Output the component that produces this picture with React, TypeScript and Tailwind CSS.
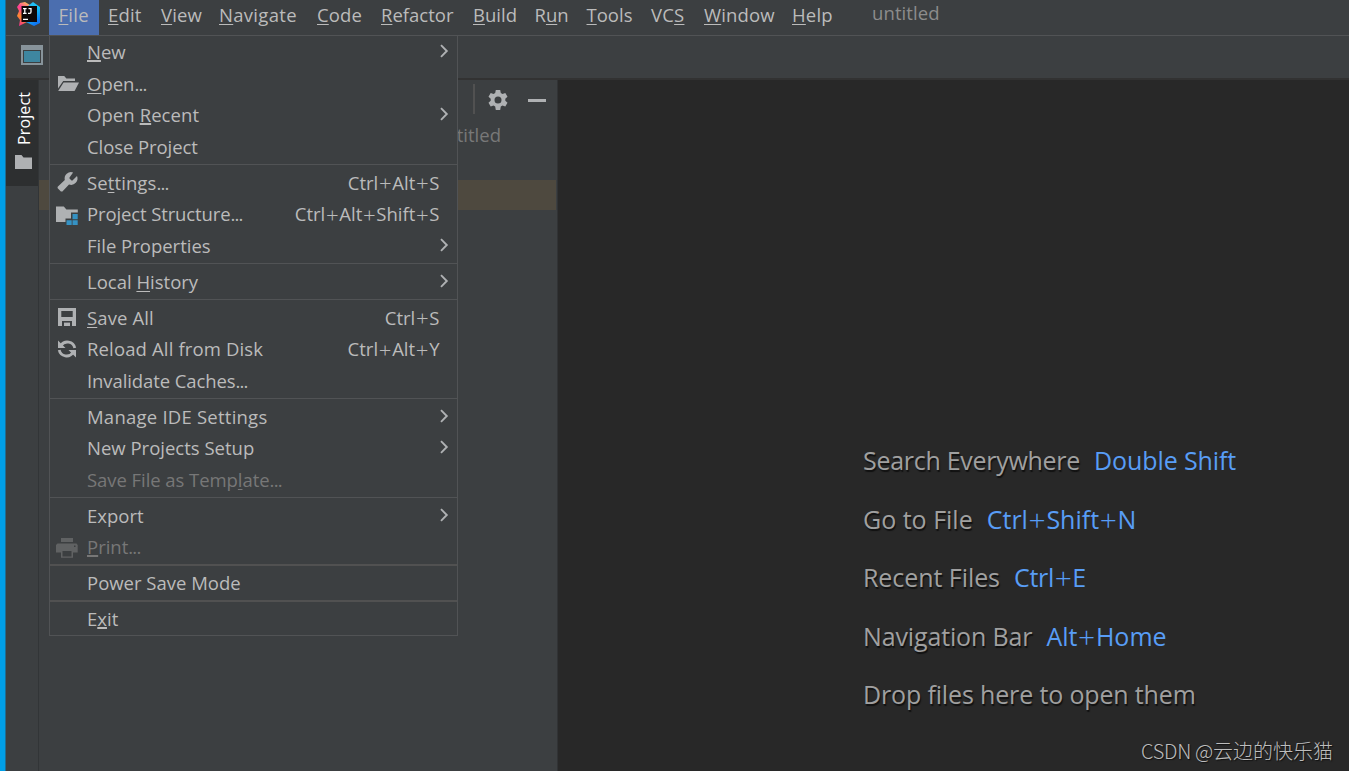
import React from "react";

type IconName = "open" | "wrench" | "structure" | "save" | "reload" | "print";

function Icon({ name }: { name: IconName }) {
  const cls = "h-6 w-6 shrink-0";
  switch (name) {
    case "open":
      return (
        <svg viewBox="0 0 24 24" className={cls} fill="#afb1b3">
          <path d="M3 4h6.2l2.2 2.6H20V9H8.2L3 16.5z" />
          <path d="M8.6 10.4H24L19.6 19H3.2z" />
        </svg>
      );
    case "wrench":
      return (
        <svg viewBox="0 0 24 24" className={cls} fill="#afb1b3">
          <path d="M14.7 6.3a1 1 0 0 0 0 1.4l1.6 1.6a1 1 0 0 0 1.4 0l4.300-4.300a6.400 6.400 0 0 1-8 8.500l-6.600 6.900a2 2 0 0 1-1.500 0l-3.200-3.200a2 2 0 0 1 0-1.500l7.100-6.700a6.400 6.400 0 0 1 8.300-7.500l-3.400 4.800z" />
        </svg>
      );
    case "structure":
      return (
        <svg viewBox="0 0 24 24" className={cls}>
          <path fill="#afb1b3" d="M1 4.500h7.800l2.600 3H22.800V10.500H16V16.500H10.500V20H1z" />
          <path fill="#3592c4" d="M17.500 12h5.200v5.200h-5.200zM11.500 18.200h5.200V23h-5.200zM17.500 18.200h5.200V23h-5.200z" />
        </svg>
      );
    case "save":
      return (
        <svg viewBox="0 0 24 24" className={cls} fill="#afb1b3" fillRule="evenodd">
          <path d="M3 2h18v18h-4v-5H7v5H3zM6.300 5v6h11.400V5z" />
          <path d="M9 16.600h6V20H9z" />
        </svg>
      );
    case "reload":
      return (
        <svg viewBox="0 0 24 24" className={cls}>
          <g fill="none" stroke="#afb1b3" strokeWidth="2.800">
            <path d="M6 8.500A7.600 7.600 0 0 1 19.800 11" />
            <path d="M18 15.500A7.600 7.600 0 0 1 4.200 13" />
          </g>
          <path fill="#afb1b3" d="M3 3.500V11h7.500zM21 20.500V13h-7.500z" />
        </svg>
      );
    case "print":
      return (
        <svg viewBox="0 0 24 24" className={cls} fill="#606263" fillRule="evenodd">
          <path d="M6 3h12v4H6z" />
          <path d="M2.500 8.500h19l1.200 1.500v7.500H18v5.300H6v-5.300H1V10zM7.500 16v5.400h9V16zM19 10.500v1.500h1.500v-1.500z" />
        </svg>
      );
  }
}

function Chevron() {
  return (
    <svg viewBox="0 0 10 14" className="-mt-[2px] mr-[8px] h-[14px] w-[10px]" fill="none" stroke="#afb1b3" strokeWidth="1.900">
      <path d="M2 1.200L7.800 7L2 12.800" />
    </svg>
  );
}

/** Renders a label whose mnemonic letter follows an ampersand; a trailing ellipsis is set tighter. */
function Label({ text, thick }: { text: string; thick?: boolean }) {
  const dots = text.endsWith("...");
  const body = dots ? text.slice(0, -3) : text;
  const i = body.indexOf("&");
  return (
    <>
      {i < 0 ? body : body.slice(0, i)}
      {i >= 0 && (
        <span
          className={
            thick
              ? "underline decoration-2 underline-offset-[1px] [text-decoration-skip-ink:none]"
              : "underline decoration-1 underline-offset-[2px] [text-decoration-skip-ink:none]"
          }
        >
          {body[i + 1]}
        </span>
      )}
      {i >= 0 && body.slice(i + 2)}
      {dots && <span className="tracking-[-0.8px]">...</span>}
    </>
  );
}

/** Key combination with slightly enlarged plus signs. */
function Keys({ text }: { text: string }) {
  return (
    <>
      {text.split("+").map((part, i) => (
        <React.Fragment key={i}>
          {i > 0 && <span className="mx-[0.700px] align-[-0.070em] text-[1.200em] leading-[0] font-light">+</span>}
          {part}
        </React.Fragment>
      ))}
    </>
  );
}

type Entry = {
  label: string;
  spacing?: string;
  icon?: IconName;
  keys?: string;
  sub?: boolean;
  disabled?: boolean;
  thick?: boolean;
};

const groups: Entry[][] = [
  [
    { label: "&New", sub: true, thick: true },
    { label: "&Open...", icon: "open" },
    { label: "Open &Recent", sub: true, thick: true, spacing: "tracking-[0.08px]" },
    { label: "Close Project", spacing: "tracking-[-0.08px]" },
  ],
  [
    { label: "Se&ttings...", icon: "wrench", keys: "Ctrl+Alt+S", spacing: "tracking-[0.1px]" },
    { label: "Project Structure...", icon: "structure", keys: "Ctrl+Alt+Shift+S", spacing: "tracking-[-0.12px]" },
    { label: "File Properties", sub: true },
  ],
  [{ label: "Local &History", sub: true }],
  [
    { label: "&Save All", icon: "save", keys: "Ctrl+S", spacing: "tracking-[0.12px]" },
    { label: "Reload All from Disk", icon: "reload", keys: "Ctrl+Alt+Y", spacing: "tracking-[0.14px]" },
    { label: "Invalidate Caches...", spacing: "tracking-[-0.1px]" },
  ],
  [
    { label: "Manage IDE Settings", sub: true, spacing: "tracking-[0.23px]" },
    { label: "New Projects Setup", sub: true },
    { label: "Save File as Temp&late...", disabled: true, spacing: "tracking-[-0.06px]" },
  ],
  [
    { label: "Export", sub: true },
    { label: "&Print...", icon: "print", disabled: true, thick: true },
  ],
  [{ label: "Power Save Mode" }],
  [{ label: "E&xit", thick: true }],
];

function FileMenu() {
  return (
    <div className="absolute top-[35px] left-[49px] h-[601px] w-[409px] border border-[#515355] bg-[#3c3f41] pt-[0.5px]">
      {groups.map((group, g) => (
        <React.Fragment key={g}>
          {g > 0 && (
            <div className={g >= 6 ? "h-[4.5px] pt-[0.8px]" : "h-[4.5px] pt-[1.5px]"}>
              <div className={g >= 6 ? "h-[2px] bg-[#515151]" : "h-px bg-[#515355]"} />
            </div>
          )}
          {group.map((e) => (
            <div
              key={e.label}
              className={`flex h-[31.5px] items-center pl-[5px] ${e.disabled ? "text-[#777777]" : "text-[#bbbbbb]"}`}
            >
              <div className="w-8 shrink-0">{e.icon && <Icon name={e.icon} />}</div>
              <span className={`grow whitespace-nowrap ${e.spacing ?? ""}`}>
                <Label text={e.label} thick={e.thick} />
              </span>
              {e.keys && (
                <span className="mr-[17.5px] whitespace-nowrap">
                  <Keys text={e.keys} />
                </span>
              )}
              {e.sub && <Chevron />}
            </div>
          ))}
        </React.Fragment>
      ))}
    </div>
  );
}

const menus = [
  { label: "&File", cls: "w-[50px] bg-[#4b6eaf] pl-[9.5px] tracking-[0.3px]" },
  { label: "&Edit", cls: "w-[53px] pl-[9px] tracking-[0.2px]" },
  { label: "&View", cls: "w-[58px] pl-[9px] tracking-[0.1px]" },
  { label: "&Navigate", cls: "w-[98px] pl-[9px] tracking-[0.3px]" },
  { label: "&Code", cls: "w-[64px] pl-[9px] tracking-[0.1px]" },
  { label: "&Refactor", cls: "w-[92px] pl-[9px]" },
  { label: "&Build", cls: "w-[62px] pl-[9px]" },
  { label: "R&un", cls: "w-[52px] pl-[8.5px]" },
  { label: "&Tools", cls: "w-[64px] pl-[8.5px]" },
  { label: "VC&S", cls: "w-[53px] pl-[9px] tracking-[0.2px]" },
  { label: "&Window", cls: "w-[88px] pl-[9px] tracking-[0.15px]" },
  { label: "&Help", cls: "w-[80px] pl-[9px] tracking-[0.2px]" },
];

function Logo() {
  return (
    <svg viewBox="0 0 24 26" className="h-[26px] w-6">
      <defs>
        <linearGradient id="warm" x1="0.600" y1="0" x2="0.300" y2="1">
          <stop offset="0" stopColor="#fdb060" />
          <stop offset="0.300" stopColor="#fe3a9a" />
          <stop offset="0.650" stopColor="#fc8b2d" />
          <stop offset="1" stopColor="#f5318c" />
        </linearGradient>
        <linearGradient id="cool" x1="0" y1="0" x2="0.500" y2="1">
          <stop offset="0" stopColor="#35b4f0" />
          <stop offset="0.500" stopColor="#10c6f8" />
          <stop offset="1" stopColor="#0f77f3" />
        </linearGradient>
      </defs>
      <path fill="url(#warm)" d="M3 2L8 1L13 4L12 20L8 22L2 25L3 19L0 15L2 10L0 6z" />
      <path fill="url(#cool)" d="M11 5L16 1L23 6V22L17 25L9 21z" />
      <path fill="#0d0708" d="M4.500 5H20v16H4.500z" />
      <path stroke="#fff" strokeWidth="1.300" fill="none" d="M6 7.700h3.600M7.800 7.700v4.600M6 12.300h3.600M11.500 7.700H14v3.300q0 1.300-1.300 1.300H11M6 18.300h5" />
    </svg>
  );
}

const hints = [
  { text: "Search Everywhere", keys: "Double Shift", spacing: "tracking-[-0.28px]", keySpacing: "tracking-[-0.1px]" },
  { text: "Go to File", keys: "Ctrl+Shift+N", spacing: "", keySpacing: "" },
  { text: "Recent Files", keys: "Ctrl+E", spacing: "tracking-[-0.06px]", keySpacing: "tracking-[-0.3px]" },
  { text: "Navigation Bar", keys: "Alt+Home", spacing: "tracking-[-0.14px]", keySpacing: "" },
  { text: "Drop files here to open them", keys: "", spacing: "tracking-[-0.15px]", keySpacing: "" },
];

export default function App() {
  return (
    <div className="relative flex h-[771px] w-[1349px] overflow-hidden bg-[#3c3f41] font-['Open_Sans','Noto_Sans_CJK_SC',sans-serif] text-[18.5px] leading-none text-[#bbbbbb]">
      <div className="w-[6px] shrink-0 border-r border-[#1e6c93] bg-[#009fe8]" />
      <div className="flex grow flex-col">
        <header className="flex h-[36px] shrink-0 border-b border-[#515355]">
          <div className="w-[43px] pt-[1px] pl-[11px]">
            <Logo />
          </div>
          {menus.map((m) => (
            <div key={m.label} className={`h-[35px] shrink-0 pt-[5px] leading-[20px] whitespace-nowrap ${m.cls}`}>
              <Label text={m.label} />
            </div>
          ))}
          <div className="pt-[3px] pl-[9px] leading-[20px] tracking-[0.1px] text-[#8c8c8c]">untitled</div>
        </header>
        <div className="h-[42px] shrink-0 pt-[9px] pl-[15px]">
          <div className="h-[20px] w-[22px] border-2 border-t-[5px] border-[#87939a] bg-[#3c3f41] p-px">
            <div className="h-full w-full bg-[#3e86a0]" />
          </div>
        </div>
        <main className="flex grow border-t-2 border-[#323232]">
          <aside className="w-[33px] shrink-0 border-r border-[#323537]">
            <div className="flex h-[106px] w-full flex-col items-center bg-[#2d2f30] pt-[12px] text-white">
              <span className="rotate-180 pr-[3px] text-[16px] leading-[18px] tracking-[0.1px] [writing-mode:vertical-rl]">
                Project
              </span>
              <svg viewBox="0 0 17 14" className="mt-[10px] mr-px ml-[3px] h-[14px] w-[17px]" fill="#afb1b3">
                <path d="M0 0h6.500l2 2.500H17V14H0z" />
              </svg>
            </div>
          </aside>
          <section className="w-[519px] shrink-0 border-r border-[#313335]">
            <div className="flex h-[40px] items-center justify-end pr-[11px]">
              <div className="-mt-[2px] h-[30px] w-[2px] bg-[#515151]" />
              <svg viewBox="0 0 20 20" className="ml-[13px] h-5 w-5" fill="#afb1b3" fillRule="evenodd">
                <path d="M7.800 0h4.400l.6 2.900 1.700 1 2.800-1 2.200 3.800-2.200 2v2l2.200 2-2.200 3.800-2.800-1-1.700 1-.6 3.500H7.800l-.6-3.500-1.700-1-2.800 1L.500 12.700l2.200-2v-2l-2.200-2L2.700 2.900l2.800 1 1.700-1zM10 6.500a3.500 3.500 0 1 0 0 7a3.500 3.500 0 1 0 0-7z" />
              </svg>
              <div className="ml-[20px] h-[3px] w-[18px] bg-[#afb1b3]" />
            </div>
            <div className="flex h-[30px] items-center justify-end pr-[56px] text-[#787878]">untitled</div>
            <div className="mt-[30px] mr-px h-[30px] bg-[#4e493f]" />
          </section>
          <section className="flex grow flex-col bg-[#282828]">
            <div className="mt-[351.4px] flex flex-col pl-[305px] text-[25px] text-[#a0a0a0]">
              {hints.map((h) => (
                <div key={h.text} className="flex h-[58.5px] items-center whitespace-nowrap">
                  <span className={`[text-shadow:1px_2px_1px_#101010] ${h.spacing}`}>{h.text}</span>
                  {h.keys && (
                    <span className={`ml-[14px] text-[#589df6] ${h.keySpacing}`}>
                      <Keys text={h.keys} />
                    </span>
                  )}
                </div>
              ))}
            </div>
            <div className="mt-auto flex justify-end pr-[16px] pb-[9px] font-['Noto_Sans_CJK_SC',sans-serif] text-[20px] leading-[22px] font-light whitespace-pre text-[#bdbdbd] [text-shadow:1px_1px_1px_#111]">
              <span className="tracking-[-0.3px]">CSDN @</span>云边的快乐猫
            </div>
          </section>
        </main>
      </div>
      <FileMenu />
    </div>
  );
}
